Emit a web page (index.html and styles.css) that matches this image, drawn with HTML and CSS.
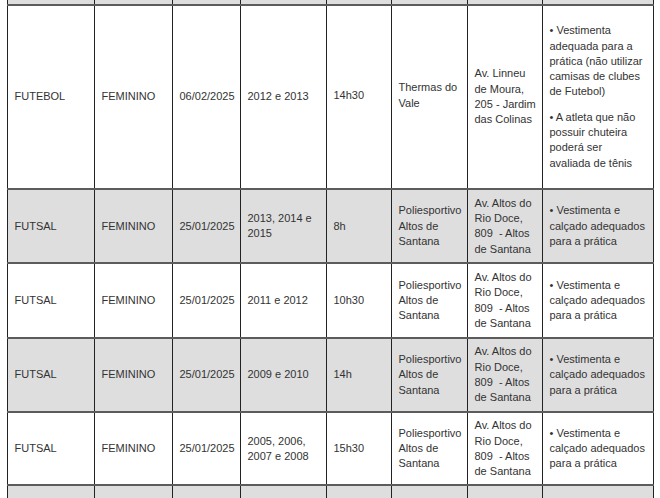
FILE: index.html
```html
<!DOCTYPE html>
<html lang="pt-BR">
<head>
<meta charset="utf-8">
<title>Avaliações</title>
<link rel="stylesheet" href="styles.css">
</head>
<body>
<div class="wrap">
<table class="grid">
  <colgroup>
    <col class="c1"><col class="c2"><col class="c3"><col class="c4"><col class="c5"><col class="c6"><col class="c7"><col class="c8">
  </colgroup>
  <tbody>
    <tr class="alt stub"><td></td><td></td><td></td><td></td><td></td><td></td><td></td><td></td></tr>
    <tr class="tall">
      <td>FUTEBOL</td>
      <td>FEMININO</td>
      <td>06/02/2025</td>
      <td>2012 e 2013</td>
      <td class="up">14h30</td>
      <td class="up">Thermas do Vale</td>
      <td>Av. Linneu de Moura, 205 - Jardim das Colinas</td>
      <td class="notes"><p>• Vestimenta adequada para a prática (não utilizar camisas de clubes de Futebol)</p><p>• A atleta que não possuir chuteira poderá ser avaliada de tênis</p></td>
    </tr>
    <tr class="alt">
      <td>FUTSAL</td>
      <td>FEMININO</td>
      <td>25/01/2025</td>
      <td>2013, 2014 e 2015</td>
      <td>8h</td>
      <td>Poliesportivo Altos de Santana</td>
      <td>Av. Altos do Rio Doce, 809&nbsp; - Altos de Santana</td>
      <td class="notes"><p>• Vestimenta e calçado adequados para a prática</p></td>
    </tr>
    <tr>
      <td>FUTSAL</td>
      <td>FEMININO</td>
      <td>25/01/2025</td>
      <td>2011 e 2012</td>
      <td>10h30</td>
      <td>Poliesportivo Altos de Santana</td>
      <td>Av. Altos do Rio Doce, 809&nbsp; - Altos de Santana</td>
      <td class="notes"><p>• Vestimenta e calçado adequados para a prática</p></td>
    </tr>
    <tr class="alt">
      <td>FUTSAL</td>
      <td>FEMININO</td>
      <td>25/01/2025</td>
      <td>2009 e 2010</td>
      <td>14h</td>
      <td>Poliesportivo Altos de Santana</td>
      <td>Av. Altos do Rio Doce, 809&nbsp; - Altos de Santana</td>
      <td class="notes"><p>• Vestimenta e calçado adequados para a prática</p></td>
    </tr>
    <tr class="last">
      <td>FUTSAL</td>
      <td>FEMININO</td>
      <td>25/01/2025</td>
      <td>2005, 2006, 2007 e 2008</td>
      <td>15h30</td>
      <td>Poliesportivo Altos de Santana</td>
      <td>Av. Altos do Rio Doce, 809&nbsp; - Altos de Santana</td>
      <td class="notes"><p>• Vestimenta e calçado adequados para a prática</p></td>
    </tr>
    <tr class="alt next"><td></td><td></td><td></td><td></td><td></td><td></td><td></td><td></td></tr>
  </tbody>
</table>
</div>
</body>
</html>
```
FILE: styles.css
```css
html, body {
  margin: 0;
  padding: 0;
  background: #ffffff;
}

.wrap {
  padding-left: 7px;
  width: 646px;
}

.grid {
  border-collapse: collapse;
  table-layout: fixed;
  width: 646px;
  font-family: "Liberation Sans", Arial, sans-serif;
  font-size: 11px;
  line-height: 15.3px;
  color: #333333;
}

.c1 { width: 87px; }
.c2 { width: 78px; }
.c3 { width: 68px; }
.c4 { width: 86px; }
.c5 { width: 65px; }
.c6 { width: 76px; }
.c7 { width: 75px; }
.c8 { width: 111px; }

.grid td {
  border-left: 1px solid #222222;
  border-right: 1px solid #222222;
  border-top: 2px solid #5c5c5c;
  border-bottom: 2px solid #5c5c5c;
  padding: 5.6px 6px 5.6px 6.5px;
  vertical-align: middle;
  text-align: left;
}

.grid td.notes {
  padding-right: 7.5px;
}

.grid td p {
  margin: 0;
}

.grid td p + p {
  margin-top: 10px;
}

.grid tr.alt td {
  background: #dedede;
}

.grid tr.stub td {
  border-top: none;
  padding: 0;
  height: 4px;
}

.grid tr.tall td {
  height: 168px;
}

.grid tr.last td {
  padding-top: 5px;
  padding-bottom: 5px;
}

.grid tr.next td {
  height: 30px;
}

.grid td.up {
  padding-bottom: 8.5px;
}
```
